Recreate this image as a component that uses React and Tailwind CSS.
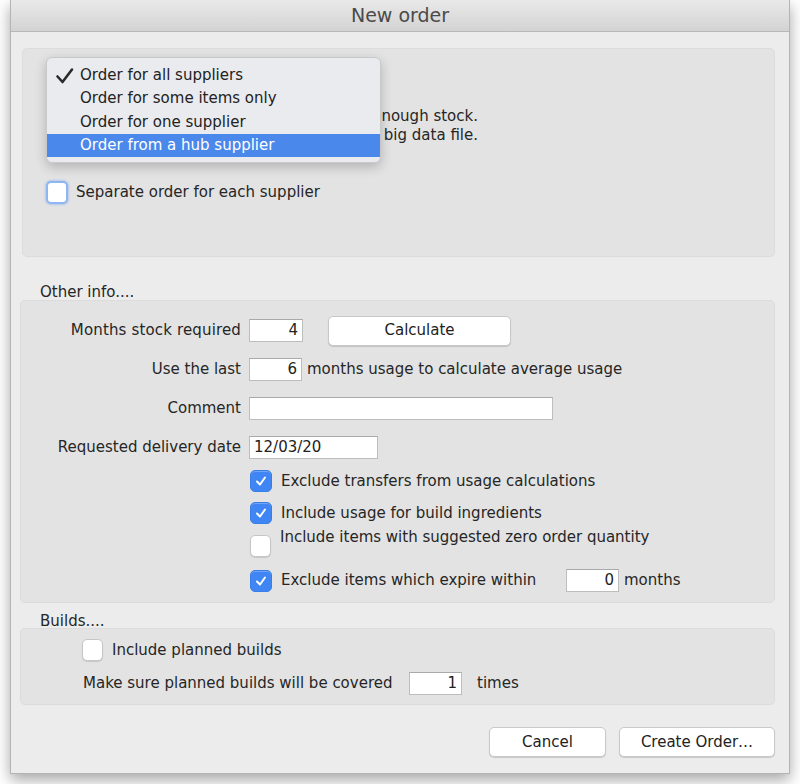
import React from "react";

const font = { fontFamily: '"DejaVu Sans", "Liberation Sans", sans-serif' };

function Check({ checked, focus }) {
  if (checked) {
    return (
      <div className="w-[22px] h-[22px] shrink-0 rounded-[5px] bg-[#3f86f4] border border-[#3a7ee6] flex items-center justify-center shadow-[inset_0_1px_0_rgba(255,255,255,0.25)]">
        <svg width="14" height="14" viewBox="0 0 14 14">
          <path d="M3 7.5 L6 10.5 L11 3.5" fill="none" stroke="white" strokeWidth="2" strokeLinecap="round" strokeLinejoin="round" />
        </svg>
      </div>
    );
  }
  if (focus) {
    return (
      <div className="w-[22px] h-[23px] shrink-0 rounded-[5px] bg-white border-2 border-[#8db6f2] shadow-[0_0_2px_1px_rgba(100,150,240,0.35)]" />
    );
  }
  return (
    <div className="w-[21px] h-[22px] shrink-0 rounded-[5px] bg-white border border-[#c6c6c6] shadow-[0_1px_1px_rgba(0,0,0,0.12)]" />
  );
}

function Field({ w, value, left }) {
  return (
    <div
      className={`${w} h-[23px] shrink-0 bg-white border border-[#bdbdbd] border-t-[#a9a9a9] flex items-center px-[4px] text-[15px] text-[#222] ${left ? "justify-start" : "justify-end"}`}
    >
      {value}
    </div>
  );
}

function Button({ w, children }) {
  return (
    <div className={`${w} h-[30px] bg-white border border-[#c8c8c8] rounded-[5px] shadow-[0_1px_1px_rgba(0,0,0,0.15)] flex items-center justify-center text-[15px] text-[#222]`}>
      {children}
    </div>
  );
}

export default function App() {
  return (
    <div className="w-[800px] h-[784px] bg-white overflow-hidden" style={font}>
      <div className="ml-[10px] w-[780px] h-[774px] flex flex-col bg-[#ececec] border border-[#b4b4b4] border-t-0 shadow-[0_6px_14px_rgba(0,0,0,0.35)] text-[#262626]">
        {/* title bar */}
        <div className="h-[32px] shrink-0 bg-gradient-to-b from-[#e9e9e9] to-[#d3d3d3] border-b border-[#b8b8b8] flex items-center justify-center text-[19px] text-[#4a4a4a]">
          New order
        </div>

        <div className="flex-1 flex flex-col pl-[9px] pr-[14px]">
          {/* order type panel */}
          <div className="relative mt-[16px] ml-[2px] h-[209px] bg-[#e3e3e3] border border-[#dcdcdc] rounded-[5px] pt-[58px]">
            <div className="ml-[21px] w-[434px] overflow-hidden whitespace-nowrap text-right text-[15px] leading-[19px]">
              <div>Items will be ordered if they don't have enough stock.</div>
              <div>This may take a long time if you have a big data file.</div>
            </div>
            <div className="mt-[36px] ml-[23px] flex items-center gap-[8px] text-[15px]">
              <Check focus />
              <span>Separate order for each supplier</span>
            </div>

            {/* popup menu */}
            <div className="absolute left-[23px] top-[8px] w-[335px] h-[106px] rounded-[6px] bg-[#eaebee] border border-[#c9c9cc] shadow-[0_4px_12px_rgba(0,0,0,0.22)] pt-[6px] text-[15px] text-[#222]">
              <div className="h-[23px] flex items-center">
                <span className="w-[33px] flex justify-end pr-[5px]">
                  <svg width="20" height="18" viewBox="0 0 20 18">
                    <path d="M2.5 9.5 L7.5 15 L17 2.5" fill="none" stroke="#2a2a2a" strokeWidth="2.6" strokeLinecap="round" strokeLinejoin="round" />
                  </svg>
                </span>
                <span>Order for all suppliers</span>
              </div>
              <div className="h-[23px] flex items-center pl-[33px]">Order for some items only</div>
              <div className="h-[24px] flex items-center pl-[33px]">Order for one supplier</div>
              <div className="h-[23px] flex items-center pl-[33px] bg-[#4b88ec] text-white">Order from a hub supplier</div>
            </div>
          </div>

          {/* other info */}
          <div className="h-[43px] pt-[27px] pl-[20px] text-[15px] leading-[16px]">Other info....</div>
          <div className="h-[303px] bg-[#e3e3e3] border border-[#dcdcdc] rounded-[5px] pt-[10px] text-[15px]">
            <div className="h-[39px] flex items-center">
              <span className="w-[221px] text-right pr-[1px] tracking-[0.15px]">Months stock required</span>
              <div className="ml-[7px]"><Field w="w-[54px]" value="4" /></div>
              <div className="ml-[25px]"><Button w="w-[183px]">Calculate</Button></div>
            </div>
            <div className="h-[39px] flex items-center">
              <span className="w-[221px] text-right pr-[1px]">Use the last</span>
              <div className="ml-[7px]"><Field w="w-[53px]" value="6" /></div>
              <span className="ml-[5px]">months usage to calculate average usage</span>
            </div>
            <div className="h-[39px] flex items-center">
              <span className="w-[221px] text-right pr-[1px]">Comment</span>
              <div className="ml-[7px]"><Field w="w-[304px]" value="" /></div>
            </div>
            <div className="h-[39px] flex items-center">
              <span className="w-[221px] text-right pr-[1px]">Requested delivery date</span>
              <div className="ml-[7px]"><Field w="w-[129px]" value="12/03/20" left /></div>
            </div>

            <div className="ml-[229px] mt-[3px] flex flex-col text-[15px]">
              <div className="flex items-center gap-[9px]">
                <Check checked />
                <span>Exclude transfers from usage calculations</span>
              </div>
              <div className="mt-[9px] flex items-center gap-[9px]">
                <Check checked />
                <span>Include usage for build ingredients</span>
              </div>
              <div className="mt-[11px] flex items-start gap-[9px]">
                <Check />
                <span className="-mt-[7px] leading-[18px]">Include items with suggested zero order quantity</span>
              </div>
              <div className="mt-[12px] flex items-center">
                <Check checked />
                <span className="ml-[9px] w-[285px]">Exclude items which expire within</span>
                <Field w="w-[53px]" value="0" />
                <span className="ml-[5px]">months</span>
              </div>
            </div>
          </div>

          {/* builds */}
          <div className="h-[25px] pt-[11px] pl-[20px] text-[15px] leading-[15px]">Builds....</div>
          <div className="h-[77px] bg-[#e3e3e3] border border-[#dcdcdc] rounded-[5px] pt-[10px] text-[15px]">
            <div className="ml-[61px] flex items-center gap-[9px]">
              <Check />
              <span>Include planned builds</span>
            </div>
            <div className="mt-[10px] ml-[62px] flex items-center">
              <span className="w-[326px]">Make sure planned builds will be covered</span>
              <Field w="w-[53px]" value="1" />
              <span className="ml-[15px]">times</span>
            </div>
          </div>

          {/* buttons */}
          <div className="mt-[22px] flex justify-end gap-[13px]">
            <Button w="w-[117px]">Cancel</Button>
            <Button w="w-[156px]">Create Order…</Button>
          </div>
        </div>
      </div>
    </div>
  );
}
